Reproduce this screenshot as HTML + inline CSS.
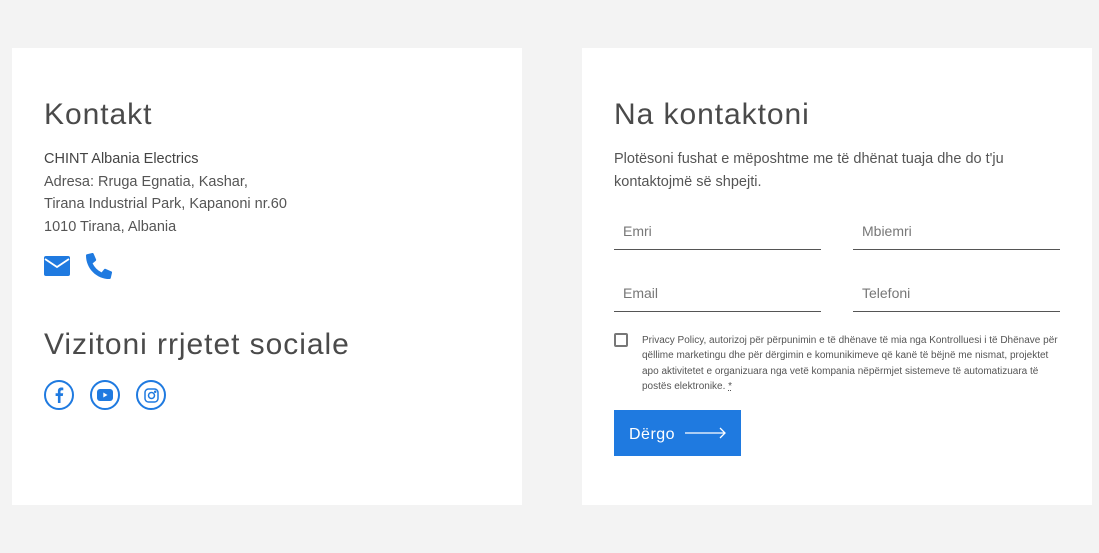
<!DOCTYPE html>
<html><head><meta charset="utf-8"><style>
*{box-sizing:border-box;margin:0;padding:0}
body{width:1099px;height:553px;background:#f3f3f3;font-family:"Liberation Sans",sans-serif;color:#4a4a4a;position:relative;overflow:hidden}
.card{position:absolute;top:48px;height:457px;background:#fff}
h2{font-weight:400;font-size:30px;color:#4a4a4a;position:absolute;letter-spacing:0.95px}
.p{position:absolute;font-size:14.5px;line-height:22.5px;color:#555}
.f{position:absolute;width:207px;border-bottom:1px solid #555;font-size:14px;color:#777;padding-left:9px;padding-top:1px;height:28px}
.soc{position:absolute;top:332px;width:30px;height:30px;border:2px solid #1f7ae0;border-radius:50%;display:flex;align-items:center;justify-content:center}
</style></head><body>
<div class="card" style="left:12px;width:510px">
<h2 style="left:32px;top:50px">Kontakt</h2>
<div class="p" style="left:32px;top:100px"><span style="color:#444">CHINT Albania Electrics</span><br>Adresa: Rruga Egnatia, Kashar,<br>Tirana Industrial Park, Kapanoni nr.60<br>1010 Tirana, Albania</div>
<svg style="position:absolute;left:32px;top:208px" width="26" height="20" viewBox="0 0 26 20"><rect x="0" y="0" width="26" height="20" rx="2" fill="#1f7ae0"/><path d="M1 3 L13 11 L25 3" stroke="#fff" stroke-width="1.8" fill="none"/></svg>
<svg style="position:absolute;left:74px;top:205px" width="26" height="26" viewBox="0 0 512 512"><path fill="#1f7ae0" d="M497 361l-112-48a24 24 0 0 0-28 7l-50 61A371 371 0 0 1 130 204l61-50a24 24 0 0 0 7-28L150 14a24 24 0 0 0-27-14L19 24A24 24 0 0 0 0 48c0 257 208 464 464 464a24 24 0 0 0 24-19l24-104a24 24 0 0 0-15-28z"/></svg>
<h2 style="left:32px;top:280px">Vizitoni rrjetet sociale</h2>
<div class="soc" style="left:32px"><svg width="10" height="16" viewBox="0 0 10 16"><path d="M6.5 16V9h2.3l.4-2.8H6.5V4.5c0-.8.3-1.3 1.4-1.3h1.4V.7C9 .6 8.2.5 7.3.5 5.3.5 3.9 1.7 3.9 4v2.2H1.6V9h2.3v7z" fill="#1f7ae0"/></svg></div>
<div class="soc" style="left:78px"><svg width="16" height="12" viewBox="0 0 16 12"><rect width="16" height="12" rx="3" fill="#1f7ae0"/><path d="M6.3 3.5v5l4.2-2.5z" fill="#fff"/></svg></div>
<div class="soc" style="left:124px"><svg width="15" height="15" viewBox="0 0 15 15" fill="none" stroke="#1f7ae0" stroke-width="1.5"><rect x="1" y="1" width="13" height="13" rx="3.5"/><circle cx="7.5" cy="7.5" r="3"/><circle cx="11.2" cy="3.8" r=".5" fill="#1f7ae0"/></svg></div>
</div>
<div class="card" style="left:582px;width:510px">
<h2 style="left:32px;top:50px">Na kontaktoni</h2>
<div class="p" style="left:32px;top:100px;width:440px">Plotësoni fushat e mëposhtme me të dhënat tuaja dhe do t'ju kontaktojmë së shpejti.</div>
<div class="f" style="left:32px;top:174px">Emri</div>
<div class="f" style="left:271px;top:174px;width:207px">Mbiemri</div>
<div class="f" style="left:32px;top:236px">Email</div>
<div class="f" style="left:271px;top:236px">Telefoni</div>
<div style="position:absolute;left:32px;top:285px;width:14px;height:14px;border:2px solid #777;border-radius:2px"></div>
<div style="position:absolute;left:60px;top:285px;width:416px;font-size:10px;line-height:15.3px;color:#555">Privacy Policy, autorizoj për përpunimin e të dhënave të mia nga Kontrolluesi i të Dhënave për qëllime marketingu dhe për dërgimin e komunikimeve që kanë të bëjnë me nismat, projektet apo aktivitetet e organizuara nga vetë kompania nëpërmjet sistemeve të automatizuara të postës elektronike. <u style="text-decoration-style:dotted">*</u></div>
<div style="position:absolute;left:32px;top:362px;width:127px;height:46px;background:#1f7ae0;color:#fff;font-size:16px;letter-spacing:.5px;padding:16px 0 0 15px">Dërgo <svg style="position:absolute;left:71px;top:17px" width="42" height="12" viewBox="0 0 42 12"><path d="M0 6H40M35 1l5 5-5 5" stroke="#fff" stroke-width="1.3" fill="none"/></svg></div>
</div>
</body></html>
